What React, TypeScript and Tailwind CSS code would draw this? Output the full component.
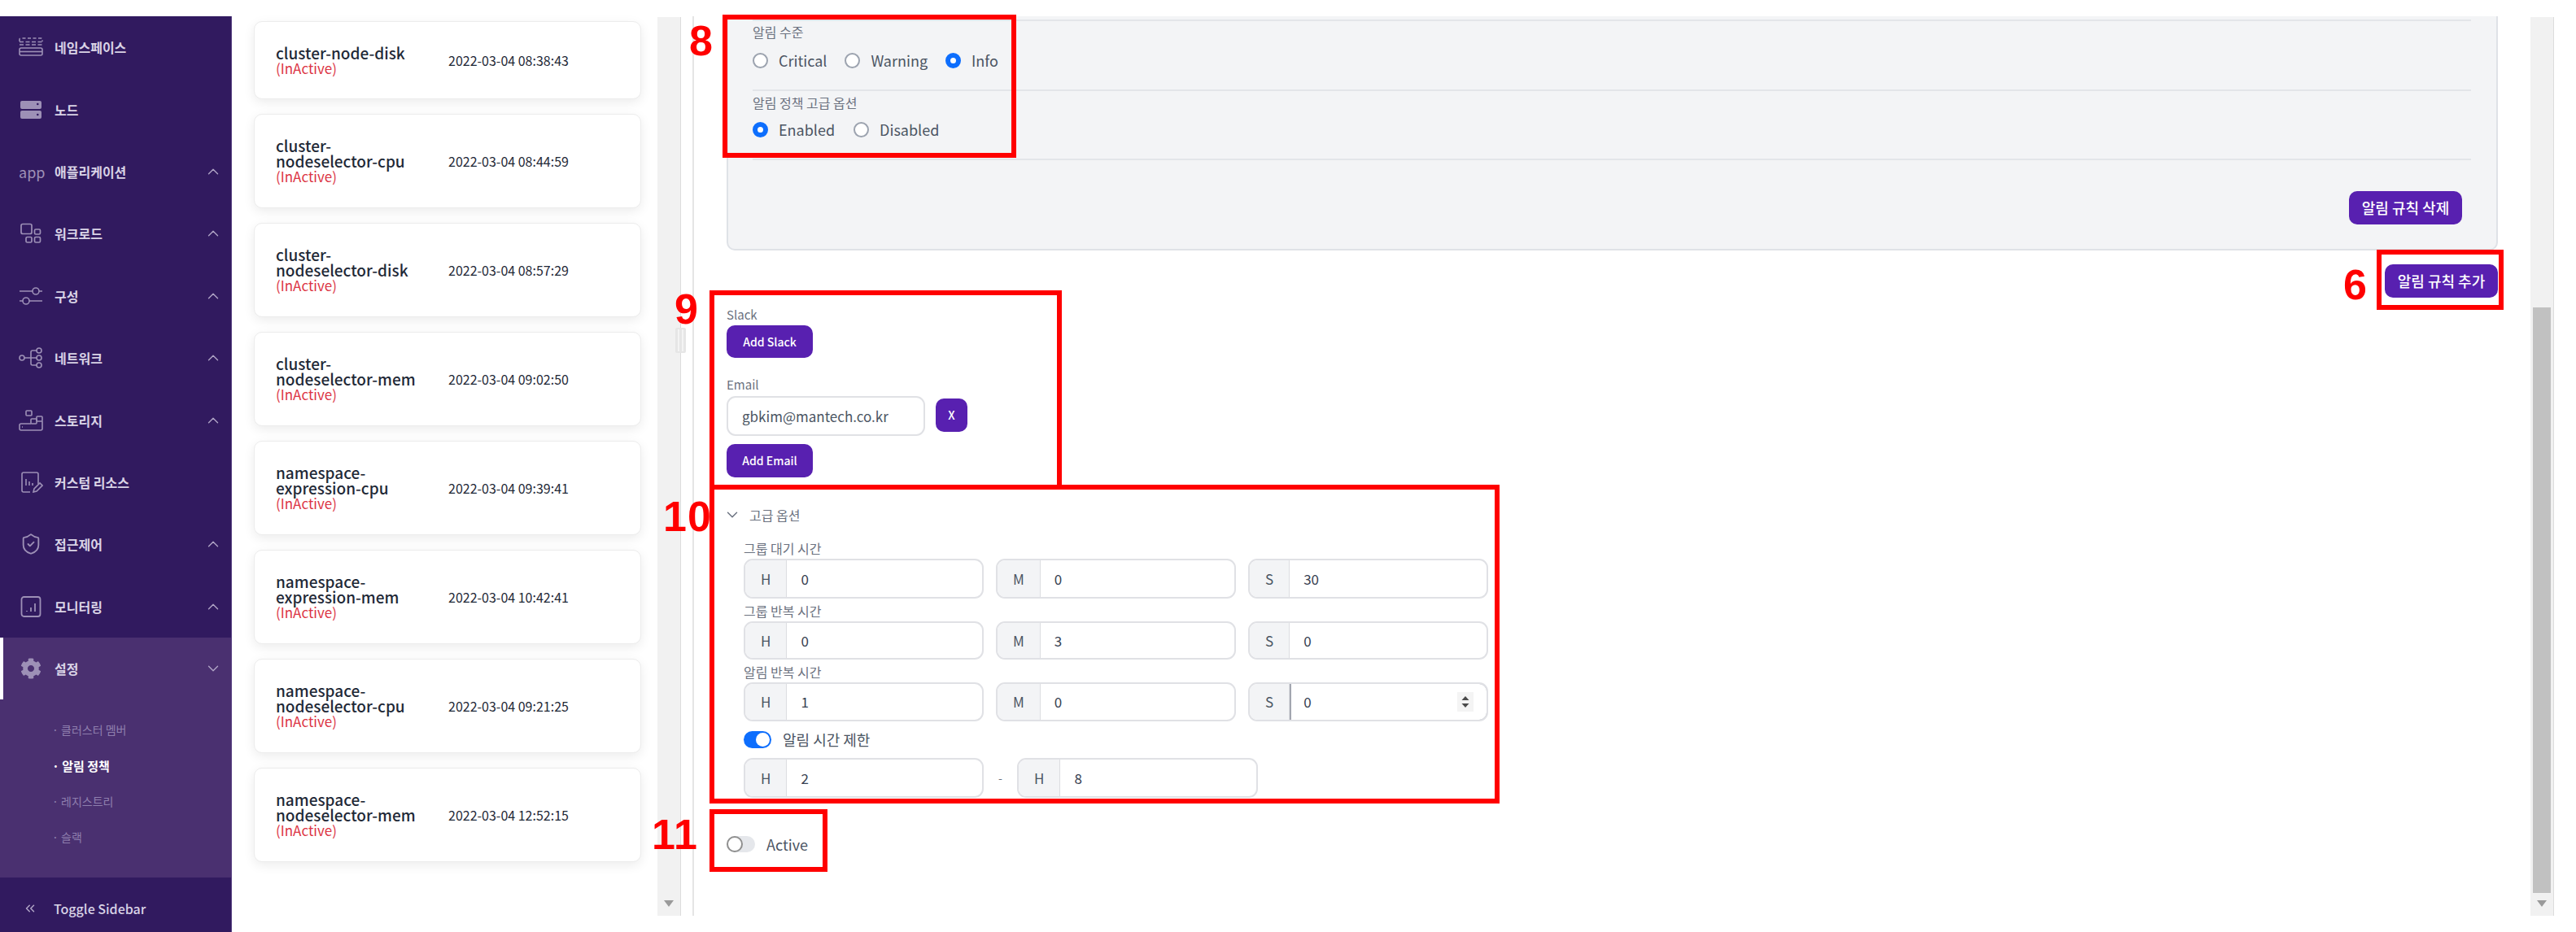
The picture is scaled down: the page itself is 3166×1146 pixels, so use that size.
import type { ReactNode } from "react";
import { ChevronDown, ChevronUp, ChevronsLeft, ShieldCheck } from "lucide-react";
import { FaCog } from "react-icons/fa";

const iconClass = "h-[26px] w-[30px] text-[#9d90b6]";

function NamespaceIcon() {
  return (
    <svg viewBox="0 0 30 26" fill="none" stroke="currentColor" strokeWidth="1.6" className={iconClass}>
      <path d="M1 6V3.5Q1 2 3 2h24q2 0 2 1.5V6" strokeDasharray="4 2.5" />
      <path d="M1 10h28M1 6.5h28" strokeDasharray="5 2.5" />
      <rect x="1" y="14" width="28" height="9" rx="2" />
      <path d="M1 18.5h28" />
    </svg>
  );
}

function NodeIcon() {
  return (
    <svg viewBox="0 0 30 26" className={iconClass}>
      <path fillRule="evenodd" fill="currentColor" d="M4 2h22a2 2 0 0 1 2 2v6a2 2 0 0 1-2 2H4a2 2 0 0 1-2-2V4a2 2 0 0 1 2-2Zm18 4a1.3 1.3 0 1 0 2.6 0 1.3 1.3 0 0 0-2.6 0ZM4 14h22a2 2 0 0 1 2 2v6a2 2 0 0 1-2 2H4a2 2 0 0 1-2-2v-6a2 2 0 0 1 2-2Zm18 5a1.3 1.3 0 1 0 2.6 0 1.3 1.3 0 0 0-2.6 0Z" />
    </svg>
  );
}

function WorkloadIcon() {
  return (
    <svg viewBox="0 0 30 26" fill="none" stroke="currentColor" strokeWidth="1.7" className={iconClass}>
      <rect x="3" y="1.5" width="13" height="12" rx="2" />
      <rect x="19.5" y="8" width="7" height="6" rx="1.5" />
      <rect x="9" y="17.5" width="7" height="6.5" rx="1.5" />
      <rect x="19.5" y="17.5" width="7" height="6.5" rx="1.5" />
    </svg>
  );
}

function ConfigIcon() {
  return (
    <svg viewBox="0 0 30 26" fill="none" stroke="currentColor" strokeWidth="1.6" className={iconClass}>
      <path d="M1 7h16M25 7h4M1 19h4M13 19h16" />
      <circle cx="21" cy="7" r="4" />
      <circle cx="9" cy="19" r="4" />
    </svg>
  );
}

function NetworkIcon() {
  return (
    <svg viewBox="0 0 30 26" fill="none" stroke="currentColor" strokeWidth="1.6" className={iconClass}>
      <circle cx="4" cy="13" r="3" />
      <circle cx="25" cy="4" r="3" />
      <circle cx="25" cy="13" r="3" />
      <circle cx="25" cy="22" r="3" />
      <path d="M7 13h15M15 13V6q0-2 2-2h5M15 13v7q0 2 2 2h5" />
    </svg>
  );
}

function StorageIcon() {
  return (
    <svg viewBox="0 0 30 26" fill="none" stroke="currentColor" strokeWidth="1.6" className={iconClass}>
      <rect x="9" y="1" width="7" height="6" rx="1" />
      <rect x="22" y="8" width="7" height="6" rx="1" />
      <rect x="15" y="11" width="7" height="6" rx="1" />
      <path d="M15 17H3q-2 0-2 2v4q0 2 2 2h24q2 0 2-2v-9" />
      <path d="M4 21h1" />
    </svg>
  );
}

function ResourceIcon() {
  return (
    <svg viewBox="0 0 30 26" fill="none" stroke="currentColor" strokeWidth="1.6" className={iconClass}>
      <path d="M14 25H6q-2 0-2-2V3q0-2 2-2h16q2 0 2 2v12" />
      <path d="M9 9v8M13 12v5M17 14v3" />
      <path d="m18 25 1-4 7-7 3 3-7 7-4 1Z" />
    </svg>
  );
}

function MonitorIcon() {
  return (
    <svg viewBox="0 0 30 26" fill="none" stroke="currentColor" strokeWidth="1.8" className={iconClass}>
      <rect x="3.5" y="1" width="23" height="24" rx="3" />
      <path d="M10 19v-1M15 19v-5M20 19V9" />
    </svg>
  );
}

const navItems: { label: string; icon: ReactNode; chevron?: boolean }[] = [
  { label: "네임스페이스", icon: <NamespaceIcon /> },
  { label: "노드", icon: <NodeIcon /> },
  {
    label: "애플리케이션",
    icon: <span className="w-[30px] text-[18px] leading-none text-[#9d90b6]">app</span>,
    chevron: true,
  },
  { label: "워크로드", icon: <WorkloadIcon />, chevron: true },
  { label: "구성", icon: <ConfigIcon />, chevron: true },
  { label: "네트워크", icon: <NetworkIcon />, chevron: true },
  { label: "스토리지", icon: <StorageIcon />, chevron: true },
  { label: "커스텀 리소스", icon: <ResourceIcon /> },
  {
    label: "접근제어",
    icon: <ShieldCheck className="h-[28px] w-[30px] text-[#9d90b6]" strokeWidth={1.6} />,
    chevron: true,
  },
  { label: "모니터링", icon: <MonitorIcon />, chevron: true },
];

const subItems = ["클러스터 멤버", "알림 정책", "레지스트리", "슬랙"];

const policies = [
  { name: "cluster-node-disk", date: "2022-03-04 08:38:43" },
  { name: "cluster-nodeselector-cpu", date: "2022-03-04 08:44:59" },
  { name: "cluster-nodeselector-disk", date: "2022-03-04 08:57:29" },
  { name: "cluster-nodeselector-mem", date: "2022-03-04 09:02:50" },
  { name: "namespace-expression-cpu", date: "2022-03-04 09:39:41" },
  { name: "namespace-expression-mem", date: "2022-03-04 10:42:41" },
  { name: "namespace-nodeselector-cpu", date: "2022-03-04 09:21:25" },
  { name: "namespace-nodeselector-mem", date: "2022-03-04 12:52:15" },
];

function Sidebar() {
  return (
    <aside className="mt-[20px] flex h-[1126px] w-[285px] shrink-0 flex-col border-r border-[#5b4585] bg-[#311a5f]">
      {navItems.map((item) => (
        <div key={item.label} className="flex h-[76.4px] shrink-0 items-center pl-[23px] pr-[11px]">
          {item.icon}
          <span className="ml-[14px] flex-1 text-[16px] font-semibold text-[#d9d3e6]">{item.label}</span>
          {item.chevron && <ChevronUp className="h-[22px] w-[22px] text-[#b0a5c6]" strokeWidth={1.5} />}
        </div>
      ))}
      <div className="h-[295px] shrink-0 bg-[#4a3070]">
        <div className="flex h-[76px] items-center border-l-4 border-white pl-[19px] pr-[11px]">
          <FaCog className="h-[26px] w-[30px] text-[#9d90b6]" />
          <span className="ml-[14px] flex-1 text-[16px] font-semibold text-[#d9d3e6]">설정</span>
          <ChevronDown className="h-[22px] w-[22px] text-[#b0a5c6]" strokeWidth={1.5} />
        </div>
        <div className="mt-[16px] pl-[64px]">
          {subItems.map((sub, i) => (
            <div
              key={sub}
              className={
                i === 1
                  ? "flex h-[44px] items-center text-[15px] font-bold text-white"
                  : "flex h-[44px] items-center text-[14px] text-[#8f7fae]"
              }
            >
              · {sub}
            </div>
          ))}
        </div>
      </div>
      <div className="flex flex-1 items-center pl-[28px] pt-[10px] text-[16px] font-medium text-[#d9d3e6]">
        <ChevronsLeft className="mr-[20px] h-[18px] w-[18px] text-[#b0a5c6]" />
        Toggle Sidebar
      </div>
    </aside>
  );
}

function PolicyList() {
  return (
    <div className="flex w-[523px] shrink-0 flex-col gap-[18px] pl-[27px] pr-[20px] pt-[26px]">
      {policies.map((p, i) => (
        <div
          key={p.date}
          className={
            (i === 0 ? "h-[96px] " : "h-[116px] ") +
            "flex shrink-0 items-center rounded-[10px] border border-[#ececec] bg-white pl-[26px] shadow-[0_4px_14px_rgba(0,0,0,0.08)]"
          }
        >
          <div className="mr-[32px] w-[180px] shrink-0">
            <div className="text-[19px] font-medium leading-[19px] text-[#1f2937]">{p.name}</div>
            <div className="text-[17px] leading-[20px] text-[#dc3545]">(InActive)</div>
          </div>
          <div className="text-[16px] text-[#1f2937]">{p.date}</div>
        </div>
      ))}
    </div>
  );
}

function Scrollbar({ thumb }: { thumb?: boolean }) {
  return (
    <div className="mt-[21px] flex h-[1105px] w-[29px] shrink-0 flex-col border-r border-[#dcdcdc] bg-[#f1f1f1]">
      <div className="flex-1 pl-[3px] pr-[3px] pt-[357px]">
        {thumb && <div className="h-[720px] bg-[#c1c1c1]" />}
      </div>
      <svg viewBox="0 0 12 8" className="mx-auto mb-[11px] h-[8px] w-[12px] text-[#9a9a9a]">
        <path d="M0 0h12L6 8Z" fill="currentColor" />
      </svg>
    </div>
  );
}

function Radio({ label, on }: { label: string; on?: boolean }) {
  return (
    <div className="flex items-center">
      <span
        className={
          on
            ? "h-[19px] w-[19px] rounded-full border-[6px] border-[#0d6efd] bg-white"
            : "h-[19px] w-[19px] rounded-full border-2 border-[#9ca3af] bg-white"
        }
      />
      <span className="ml-[13px] text-[18px] leading-[24px] text-[#4b5563]">{label}</span>
    </div>
  );
}

function PurpleButton({ children, className }: { children: ReactNode; className: string }) {
  return (
    <button className={"rounded-[10px] bg-[#5820b0] font-medium text-white " + className}>
      {children}
    </button>
  );
}

function TimeInput({
  unit,
  value,
  height,
  focused,
}: {
  unit: string;
  value: string;
  height: string;
  focused?: boolean;
}) {
  return (
    <div className={"flex overflow-hidden rounded-[11px] border-2 border-[#e0e1e5] text-[17px] " + height}>
      <span className="flex items-center border-r border-[#dcdde1] bg-[#f3f4f6] px-[19px] text-[#4b5563]">{unit}</span>
      <span
        className={
          focused
            ? "-my-[2px] -mr-[2px] flex flex-1 items-center rounded-r-[11px] border-2 border-[#a3a6b0] pl-[15px] pr-[16px] text-[#374151]"
            : "flex flex-1 items-center pl-[17px] text-[#374151]"
        }
      >
        <span className="flex-1">{value}</span>
        {focused && (
          <svg viewBox="0 0 20 24" className="h-[24px] w-[20px] bg-[#f4f4f4]">
            <path d="M10 5l4.5 5h-9ZM10 19l-4.5-5h9Z" fill="#4b4b4b" />
          </svg>
        )}
      </span>
    </div>
  );
}

function FieldLabel({ children, className }: { children: ReactNode; className: string }) {
  return <div className={"h-[20px] leading-[20px] text-[#6b7280] " + className}>{children}</div>;
}

function TimeRow({ values, height, focusLast }: { values: string[]; height: string; focusLast?: boolean }) {
  const units = ["H", "M", "S"];
  return (
    <div className="mt-[3px] grid w-[915px] grid-cols-3 gap-x-[15px]">
      {values.map((v, i) => (
        <TimeInput key={units[i]} unit={units[i]} value={v} height={height} focused={focusLast && i === 2} />
      ))}
    </div>
  );
}

function AlertRulePanel() {
  return (
    <div className="rounded-b-[10px] border-x-2 border-b-2 border-[#dfe2e7] bg-[#f3f4f6] pl-[30px] pr-[31px] pb-[30px] pt-[4px]">
      <div className="border-t-2 border-[#e3e5e9]" />
      <FieldLabel className="mt-[3px] text-[16px]">알림 수준</FieldLabel>
      <div className="mt-[13px] flex gap-x-[22px]">
        <Radio label="Critical" />
        <Radio label="Warning" />
        <Radio label="Info" on />
      </div>
      <div className="mt-[24px] border-t-2 border-[#e3e5e9]" />
      <FieldLabel className="mt-[4px] text-[16px]">알림 정책 고급 옵션</FieldLabel>
      <div className="mt-[11px] flex gap-x-[23px]">
        <Radio label="Enabled" on />
        <Radio label="Disabled" />
      </div>
      <div className="mt-[24px] border-t-2 border-[#e3e5e9]" />
      <div className="mt-[38px] flex justify-end pr-[11px]">
        <PurpleButton className="h-[41px] w-[139px] text-[18px]">알림 규칙 삭제</PurpleButton>
      </div>
    </div>
  );
}

function EditorPane() {
  return (
    <div className="mt-[20px] h-[1106px] w-[2259px] shrink-0 overflow-hidden border-l-2 border-[#e5e5e5] pl-[40px] pr-[40px]">
      <AlertRulePanel />
      <div className="mt-[17px] flex justify-end">
        <PurpleButton className="h-[41px] w-[139px] text-[18px]">알림 규칙 추가</PurpleButton>
      </div>
      <FieldLabel className="mt-[11px] text-[15px]">Slack</FieldLabel>
      <PurpleButton className="mt-[3px] block h-[40px] w-[106px] text-[14px]">Add Slack</PurpleButton>
      <FieldLabel className="mt-[23px] text-[15px]">Email</FieldLabel>
      <div className="mt-[4px] flex items-start">
        <div className="flex h-[49px] w-[244px] items-center rounded-[11px] border-2 border-[#e0e1e5] pl-[17px] text-[17px] text-[#4b5563]">
          gbkim@mantech.co.kr
        </div>
        <PurpleButton className="ml-[13px] mt-[3px] h-[41px] w-[39px] text-[14px]">X</PurpleButton>
      </div>
      <PurpleButton className="mt-[10px] block h-[41px] w-[106px] text-[14px]">Add Email</PurpleButton>
      <div className="mt-[36px] flex h-[20px] items-center text-[16px] text-[#6b7280]">
        <ChevronDown className="-ml-[4px] mr-[10px] h-[22px] w-[22px]" strokeWidth={1.6} />
        고급 옵션
      </div>
      <div className="pl-[21px]">
        <FieldLabel className="mt-[21px] text-[16px]">그룹 대기 시간</FieldLabel>
        <TimeRow values={["0", "0", "30"]} height="h-[49px]" />
        <FieldLabel className="mt-[5px] text-[16px]">그룹 반복 시간</FieldLabel>
        <TimeRow values={["0", "3", "0"]} height="h-[47px]" />
        <FieldLabel className="mt-[5px] text-[16px]">알림 반복 시간</FieldLabel>
        <TimeRow values={["1", "0", "0"]} height="h-[48px]" focusLast />
        <div className="mt-[11px] flex h-[22px] items-center">
          <span className="flex h-[21px] w-[34px] justify-end rounded-full bg-[#0d6efd] p-[2px]">
            <span className="h-[17px] w-[17px] rounded-full bg-white" />
          </span>
          <span className="ml-[14px] text-[18px] text-[#4b5563]">알림 시간 제한</span>
        </div>
        <div className="mt-[12px] flex w-[632px] items-center">
          <div className="w-[295px]">
            <TimeInput unit="H" value="2" height="h-[49px]" />
          </div>
          <span className="w-[41px] text-center text-[14px] text-[#6b7280]">-</span>
          <div className="w-[296px]">
            <TimeInput unit="H" value="8" height="h-[49px]" />
          </div>
        </div>
      </div>
      <div className="mt-[45px] flex h-[24px] items-center">
        <span className="flex h-[20px] w-[35px] rounded-full bg-[#e5e7eb]">
          <span className="h-[20px] w-[20px] rounded-full border-2 border-[#8f8f8f] bg-white" />
        </span>
        <span className="ml-[14px] text-[18px] text-[#4b5563]">Active</span>
      </div>
    </div>
  );
}

const marks = [
  { label: "8", box: "left-[888px] top-[18px] h-[176px] w-[361px]", num: "left-[847px] top-[21px]" },
  { label: "6", box: "left-[2921px] top-[307px] h-[74px] w-[156px]", num: "left-[2880px] top-[321px]" },
  { label: "9", box: "left-[872px] top-[357px] h-[245px] w-[433px]", num: "left-[829px] top-[351px]" },
  { label: "10", box: "left-[872px] top-[596px] h-[392px] w-[971px]", num: "left-[815px] top-[606px]" },
  { label: "11", box: "left-[872px] top-[995px] h-[77px] w-[145px]", num: "left-[801px] top-[997px]" },
];

export default function App() {
  return (
    <div className="relative flex h-[1146px] w-[3166px] overflow-hidden bg-white [font-family:'Noto_Sans_CJK_KR','Noto_Sans',sans-serif]">
      <Sidebar />
      <PolicyList />
      <Scrollbar />
      <div className="w-[14px] shrink-0" />
      <EditorPane />
      <Scrollbar thumb />

      {/* drag handle of the splitter, sits over the list scrollbar */}
      <div className="absolute left-[830px] top-[403px] flex h-[31px] w-[13px] justify-center gap-[3px] rounded-[2px] bg-[#e6e6e6] py-[2px]">
        <span className="w-[2px] bg-[#f4f4f4]" />
        <span className="w-[2px] bg-[#f4f4f4]" />
      </div>

      {/* red callouts drawn over the capture */}
      {marks.map((m) => (
        <div key={m.label}>
          <div className={"absolute border-[6px] border-[#ff0000] " + m.box} />
          <div
            className={
              "absolute text-[52px] font-bold leading-[58px] tracking-[1px] text-[#ff0000] [font-family:'Liberation_Sans',sans-serif] " +
              m.num
            }
          >
            {m.label}
          </div>
        </div>
      ))}
    </div>
  );
}
